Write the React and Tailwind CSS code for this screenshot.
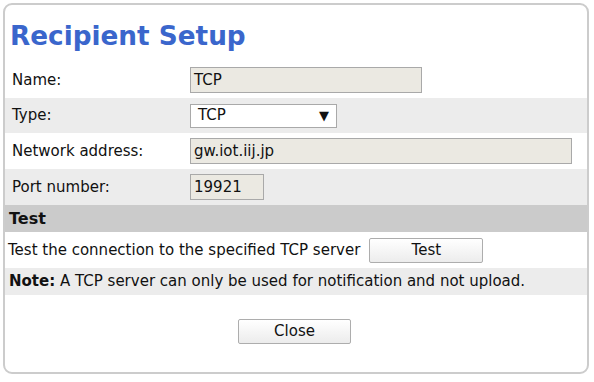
import React from 'react';

const FONT = { fontFamily: '"DejaVu Sans", Verdana, sans-serif' };

function Row({ label, gray, children }) {
  return (
    <div className={`flex items-center h-[36px] ${gray ? 'bg-[#ececec]' : 'bg-white'}`}>
      <div className="w-[185px] pl-[7px] text-[15px] text-[#111]">{label}</div>
      <div className="flex items-center">{children}</div>
    </div>
  );
}

function Field({ value, width }) {
  return (
    <div
      className={`h-[26px] ${width} border border-[#a9a9a9] bg-[#ebe9e2] pl-[3px] text-[15px] text-[#111] flex items-center`}
    >
      {value}
    </div>
  );
}

function Button({ children, width }) {
  return (
    <button
      className={`h-[25px] ${width} border border-[#adadad] rounded-[2px] bg-gradient-to-b from-white to-[#ececec] text-[15px] text-[#111] flex items-center justify-center`}
    >
      {children}
    </button>
  );
}

export default function App() {
  return (
    <div className="w-[594px] h-[382px] bg-white pt-[3px] pl-[3px]" style={FONT}>
      <div className="w-[586px] h-[371px] border-2 border-[#cccccc] rounded-[9px] overflow-hidden flex flex-col">
        <h1 className="h-[57px] pl-[5px] pt-[14px] text-[26.3px] leading-[34px] font-bold text-[#3a66cc]">
          Recipient Setup
        </h1>

        <Row label="Name:">
          <Field value="TCP" width="w-[232px]" />
        </Row>
        <div className="flex items-center h-[35px] bg-[#ececec]">
          <div className="w-[185px] pl-[7px] text-[15px] text-[#111]">Type:</div>
          <div className="h-[24px] w-[147px] border border-[#a9a9a9] bg-white flex items-center justify-between pl-[7px] pr-[7px] text-[15px] text-[#111]">
            <span>TCP</span>
            <span className="text-[13px]">▼</span>
          </div>
        </div>
        <Row label="Network address:">
          <Field value="gw.iot.iij.jp" width="w-[382px]" />
        </Row>
        <Row label="Port number:" gray>
          <Field value="19921" width="w-[74px]" />
        </Row>

        <div className="h-[27px] bg-[#cbcbcb] pl-[4px] flex items-center text-[16px] font-bold text-[#111]">
          Test
        </div>
        <div className="h-[36px] flex items-center pl-[3px] text-[15px] text-[#111] gap-[9px]">
          <span>Test the connection to the specified TCP server</span>
          <Button width="w-[114px]">Test</Button>
        </div>
        <div className="h-[27px] bg-[#ececec] pl-[4px] flex items-center text-[15px] text-[#111]">
          <span>
            <b>Note:</b> A TCP server can only be used for notification and not upload.
          </span>
        </div>

        <div className="flex justify-center pt-[24px] pr-[3px]">
          <Button width="w-[113px]">Close</Button>
        </div>
      </div>
    </div>
  );
}
